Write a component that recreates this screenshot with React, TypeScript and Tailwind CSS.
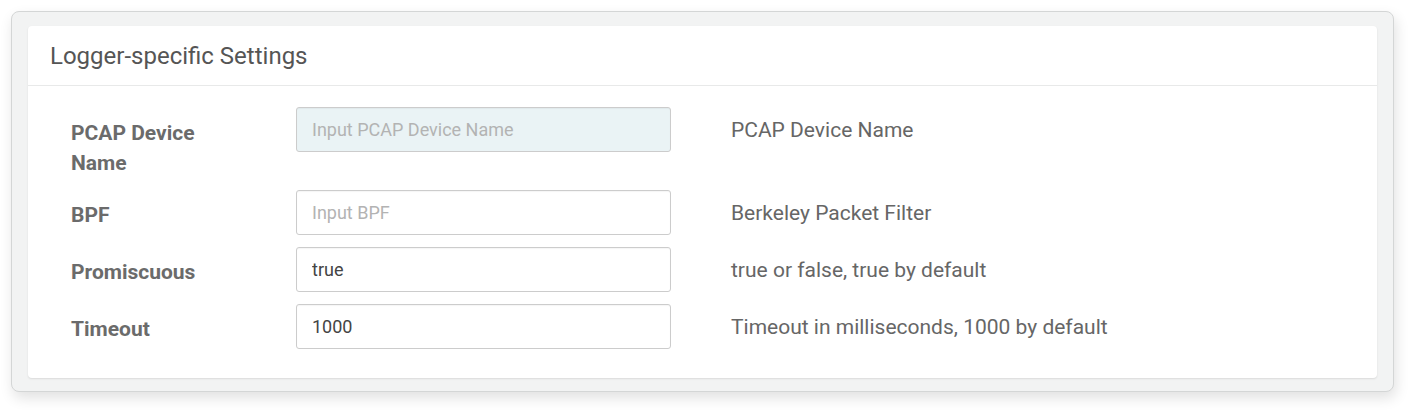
import React from "react";

const rows = [
  { label: "PCAP Device Name", placeholder: "Input PCAP Device Name", value: "", desc: "PCAP Device Name", disabled: true },
  { label: "BPF", placeholder: "Input BPF", value: "", desc: "Berkeley Packet Filter", disabled: false },
  { label: "Promiscuous", placeholder: "", value: "true", desc: "true or false, true by default", disabled: false },
  { label: "Timeout", placeholder: "", value: "1000", desc: "Timeout in milliseconds, 1000 by default", disabled: false },
];

export default function App() {
  return (
    <div className="w-[1416px] h-[415px] bg-white pt-[11px] pl-[11px]" style={{ fontFamily: "Roboto, 'Liberation Sans', sans-serif" }}>
      <div className="w-[1383px] h-[381px] rounded-[8px] border border-[#d4d6d6] bg-[#f2f3f3] shadow-[2px_6px_14px_rgba(0,0,0,0.12)] pl-[16px] pr-[16px] pt-[14px]">
        <div className="h-[352px] rounded-[4px] bg-white shadow-[0_1px_2px_rgba(0,0,0,0.1)] flex flex-col">
          <div className="h-[60px] border-b border-[#e8e9e9] flex items-center pl-[22px] text-[24px] text-[#555555]">
            Logger-specific Settings
          </div>
          <div className="flex flex-col gap-[12px] pt-[21px] pl-[43px]">
            {rows.map((r, i) => (
              <div key={i} className="flex items-start">
                <div className={`w-[225px] pr-[65px] font-bold text-[21px] leading-[30px] text-[#6b6b6b] ${i === 0 ? "pt-[11px] h-[71px]" : "pt-[10px]"}`}>
                  {r.label}
                </div>
                <input
                  readOnly
                  defaultValue={r.value}
                  placeholder={r.placeholder}
                  className={`w-[375px] h-[45px] rounded-[3px] border border-[#cccccc] px-[15px] text-[18px] text-[#444444] placeholder:text-[#b3b3b3] outline-none shadow-[inset_0_1px_1px_rgba(0,0,0,0.04)] ${r.disabled ? "bg-[#eaf3f5]" : "bg-white"}`}
                  style={{ fontFamily: "Roboto, 'Liberation Sans', sans-serif" }}
                />
                <div className="pl-[60px] pt-[8px] text-[21px] leading-[30px] text-[#666666]">{r.desc}</div>
              </div>
            ))}
          </div>
        </div>
      </div>
    </div>
  );
}
